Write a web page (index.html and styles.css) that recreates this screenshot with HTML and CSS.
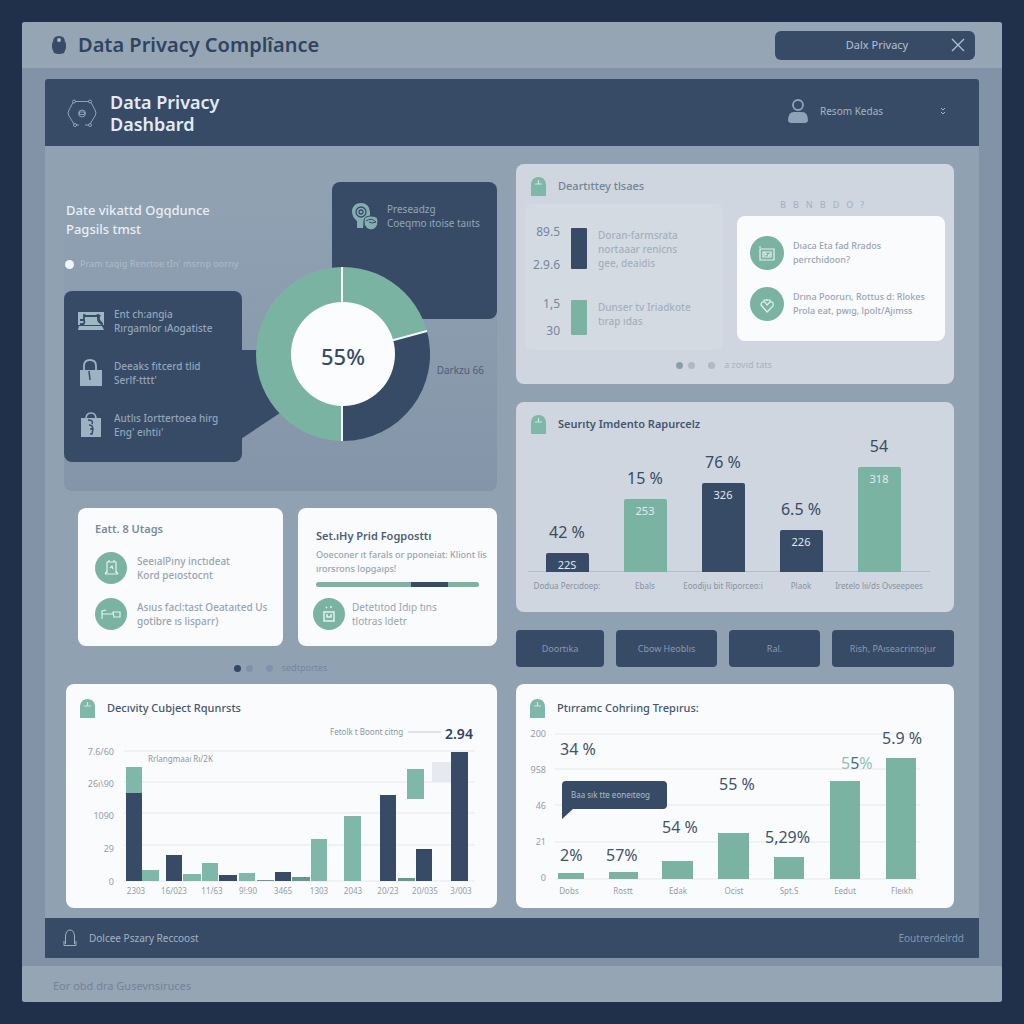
FILE: index.html
```html
<!DOCTYPE html>
<html lang="en">
<head>
<meta charset="utf-8">
<meta name="viewport" content="width=device-width, initial-scale=1">
<title>Data Privacy Compliance</title>
<link rel="stylesheet" href="styles.css">
</head>
<body>
<svg class="defs" aria-hidden="true">
  <symbol id="tag" viewBox="0 0 15 19"><path fill="#7fb7a8" d="M0 19V7Q1 0 7.500 0T15 7v12z"/><path d="M4 7h7M7.500 3v4" stroke="#cfe5df" stroke-width="1.200" fill="none"/></symbol>
</svg>
<div class="window">
  <header class="titlebar">
    <svg class="logo" viewBox="0 0 14 18" width="14" height="18" aria-hidden="true"><path fill="#374b66" d="M1 6Q1 0 7 0t6 6q1 0 1 3v3l-2 5q-5 2-10 0L0 12V9q0-3 1-3z"/><circle cx="7" cy="4" r="2" fill="#a9b8c6"/></svg>
    <h1>Data Privacy Complîance</h1>
    <button class="tab" type="button"><span>Dalx Privacy</span>
      <svg viewBox="0 0 14 14" width="14" height="14" aria-hidden="true"><path d="M1 1l12 12M13 1L1 13" stroke="#b4c1cf" stroke-width="1.300" fill="none"/></svg>
    </button>
  </header>
  <main class="frame">
    <div class="banner">
      <svg viewBox="0 0 30 30" width="30" height="30" fill="none" stroke="#8fa2b8" aria-hidden="true"><path d="M8 3.500h14M6 4.500L2 12M24 4.500l4 7.500M2 18l5 8M28 18l-5 8M9 27h3M18 27h4"/><circle cx="7" cy="3.500" r="1.500"/><circle cx="23" cy="3.500" r="1.500"/><path d="M2 12q-2 3 0 6M28 12q2 3 0 6"/><circle cx="8" cy="27" r="1.500"/><circle cx="23" cy="27" r="1.500"/><circle cx="15" cy="15.500" r="3.500"/><path d="M12.500 14h5v2.500h-5z"/></svg>
      <h2>Data Privacy<br>Dashbard</h2>
      <button class="user" type="button">
        <svg viewBox="0 0 20 24" width="20" height="24" aria-hidden="true"><circle cx="10" cy="6" r="5" fill="none" stroke="#8ea3ba" stroke-width="1.800"/><path fill="#8ea3ba" d="M0 22q0-9 6-9h8q6 0 6 9-1 2-3 2H3q-2 0-3-2z"/></svg>
        <span>Resom Kedas</span>
        <svg class="chevrons" viewBox="0 0 6 8" width="6" height="8" fill="none" stroke="#a5b4c4" aria-hidden="true"><path d="M1 1l2 2 2-2M1 5l2 2 2-2"/></svg>
      </button>
    </div>

    <div class="content">
      <div class="column">
        <section class="hero">
          <div class="intro">
            <h3>Date vikattd Ogqdunce<br>Pagsils tmst</h3>
            <p class="status">Pram taqig Renrtoe tIn' msrnp oorny</p>
            <ul class="callout facts">
              <li><svg viewBox="0 0 26 26" width="26" height="26" aria-hidden="true"><path fill="#9db7c4" d="M0 4h26v13H0z"/><path fill="none" stroke="#374b66" stroke-width="1.800" d="M2 12h4V7l3 1h8l3-1v5q2 4 5 4M6 12q2 5-4 4M22 7q-3 5 2 8"/><path fill="#9db7c4" d="M1 18h23l2 4H0z"/></svg><span>Ent ch:angia<br>Rırgamlor ıAogatiste</span></li>
              <li><svg viewBox="0 0 26 28" width="26" height="28" aria-hidden="true"><path fill="none" stroke="#9db2c2" stroke-width="1.800" d="M6 13V7q0-6 6-6t6 6v6"/><path fill="#9db2c2" d="M2 11h22v16H2z"/><path stroke="#374b66" stroke-width="1.500" d="M11 12l1 9"/></svg><span>Deeaks fıtcerd tlid<br>Serlf-tttt'</span></li>
              <li><svg viewBox="0 0 26 26" width="26" height="26" aria-hidden="true"><path fill="none" stroke="#9db2c2" stroke-width="1.600" d="M8 7q0-6 5-6t5 6"/><path fill="#9db2c2" d="M3 6h20v19H3z"/><path fill="none" stroke="#374b66" stroke-width="1.500" d="M10 8q6 0 4 4M11 13q5 0 3 5M12 17h3l-1 5h-2"/></svg><span>Autlıs Iorttertoea hirg<br>Eng' eıhtiı'</span></li>
            </ul>
          </div>
          <div class="callout reading">
            <svg viewBox="0 0 28 28" width="28" height="28" aria-hidden="true"><path fill="#86aeb0" d="M1 9Q2 1 10 1t9 9v5l-6 2-1 9H6V19Q1 15 1 9z"/><g fill="none" stroke="#374b66" stroke-width="1.300"><circle cx="10" cy="10" r="5"/><circle cx="10" cy="10" r="2"/></g><path fill="#86aeb0" stroke="#374b66" d="M13 19q0-5 7-5t7 5q0 8-7 9-7-1-7-9z"/><path d="M15 19q5-4 10 1-4 2-7 0" fill="none" stroke="#374b66"/></svg>
            <span>Preseadzg<br>Coeqmo ıtoise taııts</span>
          </div>
          <svg class="pointer" viewBox="0 0 60 90" width="60" height="90" aria-hidden="true"><path fill="#374b66" d="M0 0h60v49L0 89z"/></svg>
          <svg class="donut" viewBox="0 0 174 174" width="174" height="174" role="img" aria-label="55%">
            <circle cx="87" cy="87" r="87" fill="#7bb3a3"/>
            <path fill="#374b66" d="M87 87L171 64A87 87 0 0 1 87 174z"/>
            <path d="M86 0v174M86 87l85-23" stroke="#f4f8f8" stroke-width="2" fill="none"/>
            <circle cx="87" cy="87" r="52" fill="#fbfcfd"/>
            <text x="87" y="98" text-anchor="middle" class="donut-value">55%</text>
          </svg>
          <span class="donut-note">Darkzu 66</span>
        </section>

        <div class="pair">
          <section class="card usage">
            <h3>Eatt. 8 Utags</h3>
            <ul class="items">
              <li><svg viewBox="0 0 32 32" width="32" height="32" aria-hidden="true"><circle cx="16" cy="16" r="16" fill="#7bb3a3"/><path fill="none" stroke="#e4f2ee" stroke-width="1.200" d="M12 21V10h9v11M10 22h13M14 10V8M19 10V8M12 19l-2 3M21 19l2 3M15 16l2-2 1 3"/></svg><span>SeeıalPıny inctıdeat<br>Kord peıostocnt</span></li>
              <li><svg viewBox="0 0 32 32" width="32" height="32" aria-hidden="true"><circle cx="16" cy="16" r="16" fill="#7bb3a3"/><path fill="none" stroke="#e4f2ee" stroke-width="1.200" d="M7 21v-8l4-1M7 16h11M18 14h7v5h-6z"/></svg><span>Asıus facl:tast Oeataıted Us<br>gotibre ıs lisparr)</span></li>
            </ul>
          </section>
          <section class="card posture">
            <h3>Set.ıHy Prid Fogposttı</h3>
            <p>Ooeconer ıt farals or pponeiat: Kliont lis<br>ırorsrons lopgaıps!</p>
            <div class="meter"><span class="meter-fill"></span></div>
            <div class="item"><svg viewBox="0 0 32 32" width="32" height="32" aria-hidden="true"><circle cx="16" cy="16" r="16" fill="#7bb3a3"/><path fill="none" stroke="#e4f2ee" stroke-width="1.500" d="M11 14h10v9H11zM14 16v3h4v-3M13 9l1 1M18 8v2"/></svg><span>Detetıtod Idıp tıns<br>tlotras ldetr</span></div>
          </section>
        </div>

        <div class="pager pager-left"><i class="dot dark"></i><i class="dot soft"></i><i class="dot soft apart"></i><span>sedtportes</span></div>

        <section class="card chart-card requests">
          <h3 class="heading"><svg width="15" height="19" aria-hidden="true"><use href="#tag"/></svg>Decıvity Cubject Rqunrsts</h3>
          <svg class="plot" viewBox="0 0 431 184" role="img" aria-label="Requests by period">
            <path class="grid" d="M58 27h351M58 58h351M58 89h351M58 121h351M58 157h351"/>
            <g class="axis" text-anchor="end"><text x="48" y="31">7.6/60</text><text x="48" y="63">26ı\90</text><text x="48" y="95">1090</text><text x="48" y="128">29</text><text x="48" y="161">0</text></g>
            <g fill="#7fb7a8">
              <path d="M60 43h16v26H60zM76 146h17v11H76zM117 150h18v7h-18zM136 139h16v18h-16zM173 149h16v8h-16zM245 115h16v42h-16zM278 92h17v65h-17zM341 45h17v30h-17z"/>
              <path fill="#67998f" d="M191 156h17v1h-17zM226 153h18v4h-18zM332 154h17v3h-17z"/>
            </g>
            <path fill="#e6e9f0" d="M366 38h19v20h-19z"/>
            <path fill="#374b66" d="M60 69h16v88H60zM100 131h16v26h-16zM153 151h18v6h-18zM209 148h16v9h-16zM314 71h16v86h-16zM350 125h16v32h-16zM385 28h17v129h-17z"/>
            <g class="axis small" text-anchor="middle"><text x="70" y="170">2303</text><text x="108" y="170">16/023</text><text x="146" y="170">11/63</text><text x="182" y="170">9!:90</text><text x="217" y="170">3465</text><text x="253" y="170">1303</text><text x="287" y="170">2043</text><text x="322" y="170">20/23</text><text x="359" y="170">20/035</text><text x="395" y="170">3/003</text></g>
            <g class="note"><text x="82" y="38">Rrlangmaaı Rı/2K</text><text x="264" y="11">Fetolk t Boont citng</text></g>
            <path d="M342 8h33" stroke="#c4cad3"/>
            <text class="peak" x="379" y="15">2.94</text>
          </svg>
        </section>
      </div>

      <div class="column">
        <section class="card pale identity">
          <h3 class="heading"><svg width="15" height="19" aria-hidden="true"><use href="#tag"/></svg>Deartıttey tlsaes</h3>
          <div class="identity-body">
            <div class="scales">
              <div class="scale"><div class="marks"><span>89.5</span><span>2.9.6</span></div><i class="swatch navy"></i><p>Doran-farmsrata<br>nortaaar renicns<br>gee, deaidis</p></div>
              <div class="scale short"><div class="marks"><span>1,5</span><span>30</span></div><i class="swatch green"></i><p>Dunser tv Iriadkote<br>tırap ıdas</p></div>
            </div>
            <div class="topics">
              <p class="glyphs"><span>B</span><span>B</span><span>N</span><span>B</span><span>D</span><span>O</span><span>?</span></p>
              <ul class="items card">
                <li><svg viewBox="0 0 34 34" width="34" height="34" aria-hidden="true"><circle cx="17" cy="17" r="17" fill="#7bb3a3"/><path fill="none" stroke="#e4f2ee" stroke-width="1.200" d="M10 13h14v11H10zM13 16h8v5h-8zM9 11h2M15 16v3l2-1M18 20l2-2"/></svg><span>Dıaca Eta fad Rrados<br>perrchidoon?</span></li>
                <li><svg viewBox="0 0 34 34" width="34" height="34" aria-hidden="true"><circle cx="17" cy="17" r="17" fill="#7bb3a3"/><path fill="none" stroke="#e4f2ee" stroke-width="1.200" d="M17 25l-6-7q0-4 4-3l2 3 3-3q4-1 3 4zM14 15v-2h6v2M17 14v-2"/></svg><span>Drına Poorurı, Rottus d: Rlokes<br>Prola eat, pwıg, lpolt/Ajımss</span></li>
              </ul>
            </div>
          </div>
          <div class="pager"><i class="dot slate"></i><i class="dot mist"></i><i class="dot mist apart"></i><span>a zovıd tats</span></div>
        </section>

        <section class="card pale incidents">
          <h3 class="heading"><svg width="15" height="19" aria-hidden="true"><use href="#tag"/></svg>Seurıty Imdento Rapurcelz</h3>
          <div class="bars">
            <div class="bar-col"><b>42 %</b><span class="bar navy" style="height:19px">22S</span></div>
            <div class="bar-col"><b>15 %</b><span class="bar green" style="height:73px">253</span></div>
            <div class="bar-col"><b>76 %</b><span class="bar navy" style="height:89px">326</span></div>
            <div class="bar-col"><b>6.5 %</b><span class="bar navy" style="height:42px">226</span></div>
            <div class="bar-col"><b>54</b><span class="bar green" style="height:105px">318</span></div>
          </div>
          <div class="bar-labels"><span>Dodua Percıdoep:</span><span>Ebals</span><span>Eoodiju bit Riporceo:i</span><span>Plaok</span><span>Iretelo lıi/ds Ovseepees</span></div>
        </section>

        <nav class="actions">
          <button type="button">Doortıka</button>
          <button type="button">Cbow Heoblıs</button>
          <button type="button">Ral.</button>
          <button type="button">Rish, PAıseacrintojur</button>
        </nav>

        <section class="card chart-card coverage">
          <h3 class="heading"><svg width="15" height="19" aria-hidden="true"><use href="#tag"/></svg>Ptırramc Cohriıng Trepırus:</h3>
          <svg class="plot" viewBox="0 0 438 184" role="img" aria-label="Coverage by group">
            <path class="grid" d="M39 10h365M39 45h365M39 81h365M39 118h365M39 155h365"/>
            <g class="axis" text-anchor="end"><text x="30" y="13">200</text><text x="30" y="49">958</text><text x="30" y="85">46</text><text x="30" y="121">21</text><text x="30" y="157">0</text></g>
            <path fill="#7bb3a3" d="M42 149h26v6H42zM93 148h29v7H93zM146 137h31v18h-31zM202 109h31v46h-31zM258 133h30v22h-30zM314 57h30v98h-30zM370 34h30v121h-30z"/>
            <g class="value"><text x="44" y="31">34 %</text><text x="44" y="137">2%</text><text x="90" y="137">57%</text><text x="146" y="109">54 %</text><text x="203" y="66">55 %</text><text x="249" y="119">5,29%</text><text x="325" y="45" fill="#8fc1b6">5<tspan fill="#44708a">5</tspan>%</text><text x="366" y="20">5.9 %</text></g>
            <path fill="#374b66" d="M50 57h97q4 0 4 4v20q0 4-4 4H57l-11 10V61q0-4 4-4z"/>
            <text class="tip" x="55" y="74">Baa sık tte eoneıteog</text>
            <g class="axis small" text-anchor="middle"><text x="53" y="170">Dobs</text><text x="107" y="170">Rostt</text><text x="162" y="170">Edak</text><text x="218" y="170">Ocist</text><text x="273" y="170">Spt.S</text><text x="329" y="170">Eedut</text><text x="386" y="170">Fleıkh</text></g>
          </svg>
        </section>
      </div>
    </div>

    <div class="panel-footer">
      <svg viewBox="0 0 14 18" width="14" height="18" fill="none" stroke="#9fb0c2" aria-hidden="true"><path d="M2.500 15V7Q3 1 7 1t4.500 6v8M1 12v4.500h12V12"/></svg>
      <span>Dolcee Pszary Reccoost</span>
      <a href="#">Eoutrerdelrdd</a>
    </div>
  </main>
  <footer class="statusbar">Eor obd dra Gusevnsiruces</footer>
</div>
</body>
</html>
```

FILE: styles.css
```css
* { box-sizing: border-box; }

body {
  margin: 0;
  padding: 22px;
  background: #21304a;
  color: #374b66;
  font-family: "Noto Sans", "Open Sans", sans-serif;
  font-size: 10px;
  line-height: 14px;
}

h1, h2, h3, p, ul { margin: 0; padding: 0; font-weight: 500; }
ul { list-style: none; }
svg { display: block; flex: none; }
button { border: 0; font: inherit; }
.defs { position: absolute; width: 0; height: 0; }

.window { border-radius: 3px; background: #8293a8; overflow: hidden; }

.titlebar {
  display: flex;
  align-items: center;
  min-height: 46px;
  padding: 0 27px 0 30px;
  background: #95a5b4;
}
.titlebar h1 {
  margin-left: 12px;
  color: #304460;
  font-size: 20px;
  font-weight: 600;
  line-height: 28px;
}
.tab {
  display: flex;
  align-items: center;
  width: 200px;
  height: 29px;
  margin-left: auto;
  padding: 0 10px;
  border-radius: 6px;
  background: #374b66;
  color: #b4c1cf;
  font-size: 11px;
}
.tab span { flex: 1; padding-left: 18px; }

.frame { margin: 11px 23px 8px; border-radius: 3px 3px 0 0; background: #90a1b2; overflow: hidden; }

.banner {
  display: flex;
  align-items: center;
  gap: 13px;
  min-height: 67px;
  padding: 0 33px 0 22px;
  background: #374b66;
}
.banner h2 { color: #e3eaf3; font-size: 18px; font-weight: 600; line-height: 22px; }
.user {
  display: flex;
  align-items: center;
  gap: 12px;
  width: 158px;
  margin-left: auto;
  padding: 0 0 4px;
  background: none;
  color: #a5b4c4;
}
.chevrons { margin-left: auto; }

.content {
  display: grid;
  grid-template-columns: 433fr 438fr;
  gap: 19px;
  padding: 18px 25px 10px 19px;
}
.column { display: flex; flex-direction: column; min-width: 0; }

.card { border-radius: 8px; background: #fafbfc; }
.pale { background: #cfd6df; }

.heading {
  display: flex;
  align-items: center;
  gap: 12px;
  color: #44566f;
  font-size: 11px;
  line-height: 20px;
}

/* Hero with the ring and its two callouts */
.hero {
  position: relative;
  display: flex;
  justify-content: space-between;
  align-items: flex-start;
  min-height: 327px;
  border-radius: 8px;
  background: linear-gradient(#90a1b200 10%, #8495a9);
}
.intro { padding-top: 37px; }
.intro h3 { padding-left: 2px; color: #e9eff5; font-size: 13px; font-weight: 500; line-height: 19px; }
.status {
  display: flex;
  align-items: center;
  gap: 6px;
  margin-top: 18px;
  padding-left: 1px;
  color: #aab8c8;
  font-size: 9px;
}
.status::before { content: ""; width: 9px; height: 9px; border-radius: 50%; background: #edf5f7; }
.callout { border-radius: 8px; background: #374b66; color: #93a5b9; }
.facts {
  display: flex;
  flex-direction: column;
  gap: 24px;
  width: 178px;
  min-height: 171px;
  margin-top: 20px;
  padding: 16px 0 0 14px;
}
.facts li { display: flex; align-items: center; gap: 10px; white-space: nowrap; }
.reading {
  display: flex;
  gap: 8px;
  width: 165px;
  min-height: 137px;
  margin-top: 18px;
  padding: 20px 0 0 19px;
  white-space: nowrap;
}
.pointer { position: absolute; top: 186px; left: 177px; }
.donut { position: absolute; top: 103px; right: 67px; }
.donut-value { fill: #374b66; font-size: 22px; font-weight: 500; }
.donut-note { position: absolute; top: 199px; right: 13px; color: #4b5f78; }

/* Two small cards */
.pair {
  display: grid;
  grid-template-columns: minmax(0, 205fr) minmax(0, 199fr);
  gap: 15px;
  min-height: 138px;
  margin: 17px 0 0 14px;
}
.pair h3 { color: #7a8b9f; font-size: 11px; font-weight: 600; line-height: 18px; }
.pair, .topics { color: #98a4b3; white-space: nowrap; }
.usage { padding: 12px 0 0 17px; }
.items { display: flex; flex-direction: column; gap: 14px; }
.items li, .item { display: flex; align-items: center; gap: 10px; }
.usage .items { margin-top: 14px; }
.posture { padding: 19px 18px 0 18px; }
.posture h3 { color: #4c5f78; }
.posture p { margin-top: 3px; font-size: 9px; }
.meter { display: flex; height: 5px; margin: 6px 0 11px; border-radius: 3px; background: #7fb2a5; }
.meter-fill { width: 23%; margin-left: 58%; background: #374b66; }
.item { margin-left: -3px; gap: 7px; }

.pager {
  display: flex;
  align-items: center;
  justify-content: center;
  gap: 5px;
  color: #a8b3c0;
  font-size: 9px;
}
.pager span { margin-left: 4px; }
.pager-left { min-height: 38px; padding: 6px 0 0; color: #7486a0; }
.dot { width: 7px; height: 7px; border-radius: 50%; }
.apart { margin-left: 8px; }
.dark { background: #33476a; }
.soft { background: #8092ab; }
.slate { background: #8e9daa; }
.mist { background: #adb9c5; }

/* Plots */
.chart-card { min-height: 224px; padding-top: 14px; }
.chart-card .heading { padding-left: 14px; margin-bottom: 6px; }
.requests { margin-left: 2px; }
.plot { width: 100%; height: auto; }
.grid { stroke: #e4e7eb; fill: none; }
.axis { fill: #929eac; font-size: 9px; }
.small { font-size: 8px; }
.note { fill: #8a97a7; font-size: 8px; }
.peak { fill: #304460; font-size: 14px; font-weight: 600; }
.value { fill: #40536d; font-size: 16px; }
.tip { fill: #aebccb; font-size: 8px; }

/* Identity card */
.identity { min-height: 220px; padding: 12px 9px 0; }
.identity .heading { padding-left: 6px; color: #738397; }
.identity-body { display: grid; grid-template-columns: 198fr 208fr; gap: 14px; margin-top: 8px; }
.scales {
  display: flex;
  flex-direction: column;
  gap: 31px;
  min-height: 146px;
  padding: 24px 0 0 8px;
  border-radius: 8px;
  background: #d3dae2;
  color: #a5b0bd;
  white-space: nowrap;
}
.scale { display: flex; gap: 11px; height: 41px; }
.scale.short { height: 35px; }
.marks {
  display: flex;
  flex-direction: column;
  justify-content: space-between;
  width: 27px;
  color: #76879d;
  font-size: 12px;
  line-height: 8px;
  text-align: right;
}
.swatch { width: 16px; border-radius: 1px; }
.navy { background: #374b66; }
.green { background: #7bb3a3; }
.glyphs {
  display: flex;
  gap: 7px;
  height: 12px;
  padding-left: 43px;
  color: #a8b3c1;
  font-size: 9px;
  line-height: 1px;
}
.topics .items { gap: 17px; min-height: 125px; padding: 20px 0 0 13px; }
.topics .items li { font-size: 9px; gap: 9px; }
.identity .pager { margin-top: 8px; padding-right: 22px; }

/* Incidents */
.incidents { min-height: 210px; margin-top: 18px; padding: 12px 24px 0 12px; }
.incidents .heading { padding-left: 3px; height: 20px; font-weight: 600; }
.bars {
  display: grid;
  grid-template-columns: repeat(5, 1fr);
  align-items: end;
  height: 138px;
  padding-right: 12px;
  border-bottom: 1px solid #b4becb;
}
.bar-col { display: flex; flex-direction: column; align-items: center; gap: 9px; }
.bar-col b { font-size: 16px; font-weight: 400; line-height: 24px; }
.bar {
  width: 43px;
  padding-top: 5px;
  border-radius: 2px 2px 0 0;
  color: #e0e9ef;
  font-size: 11px;
  line-height: 14px;
  text-align: center;
}
.bar-labels {
  display: grid;
  grid-template-columns: repeat(5, minmax(0, 1fr));
  padding: 7px 12px 0 0;
  color: #8793a3;
  font-size: 8px;
  white-space: nowrap;
}
.bar-labels span { display: flex; justify-content: center; }

.actions { display: grid; grid-template-columns: 88fr 101fr 91fr 122fr; gap: 12px; margin: 18px 0 17px; }
.actions button {
  min-height: 37px;
  padding: 0;
  border-radius: 4px;
  background: #374b66;
  color: #8799af;
  font-size: 9px;
}

.panel-footer {
  display: flex;
  align-items: center;
  gap: 12px;
  min-height: 40px;
  padding: 0 15px 0 18px;
  background: #374b66;
  color: #a3b2c3;
}
.panel-footer a { margin-left: auto; color: #8296ad; text-decoration: none; }

.statusbar { min-height: 36px; padding: 13px 31px 0; background: #95a5b4; color: #718399; font-size: 11px; }
```
